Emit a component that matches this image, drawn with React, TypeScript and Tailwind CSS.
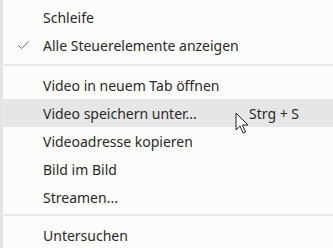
import { Check } from "lucide-react";

type Item = { label: string; shortcut?: string; checked?: boolean; active?: boolean };

const groups: Item[][] = [
  [{ label: "Schleife" }, { label: "Alle Steuerelemente anzeigen", checked: true }],
  [
    { label: "Video in neuem Tab öffnen" },
    { label: "Video speichern unter...", shortcut: "Strg + S", active: true },
    { label: "Videoadresse kopieren" },
    { label: "Bild im Bild" },
    { label: "Streamen..." },
  ],
  [{ label: "Untersuchen" }],
];

function Cursor() {
  return (
    <svg className="absolute left-[232px] top-[112px]" width="16" height="24" viewBox="0 0 16 24">
      <path
        d="M1 1 L1 18 L5 14 L8 21 L10.5 20 L7.5 13 L13 13 Z"
        fill="white"
        stroke="#222"
        strokeWidth="1"
        strokeLinejoin="round"
      />
    </svg>
  );
}

export default function App() {
  return (
    <div
      className="relative h-[248px] w-[333px] overflow-hidden border-l-[3px] border-[#e4e4e4] bg-[#fcfcfa] pt-[3px] text-[14px] text-[#2a2a2a]"
      style={{ fontFamily: '"Segoe UI", "Noto Sans", sans-serif' }}
    >
      {groups.map((group, gi) => (
        <div key={gi}>
          {gi > 0 && (
            <div className={gi === 2 ? "pt-[3px] pb-[5px]" : "py-[5px]"}>
              <div className="h-[2px] bg-[#e8e8e6]" />
            </div>
          )}
          {group.map((item) => (
            <div
              key={item.label}
              className={`flex h-[28px] items-center ${item.active ? "bg-[#e6e6e6]" : ""}`}
            >
              <div className="flex w-[40px] justify-center">
                {item.checked && <Check className="h-[15px] w-[15px] text-[#666]" strokeWidth={1.5} />}
              </div>
              <span className="w-[206px]">{item.label}</span>
              {item.shortcut && <span>{item.shortcut}</span>}
            </div>
          ))}
        </div>
      ))}
      <Cursor />
    </div>
  );
}
